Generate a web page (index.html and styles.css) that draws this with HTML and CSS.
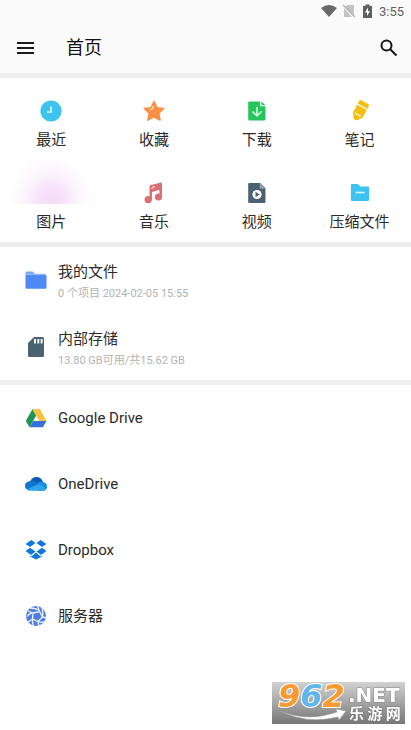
FILE: index.html
```html
<!DOCTYPE html>
<html lang="zh-CN">
<head>
<meta charset="utf-8">
<meta name="viewport" content="width=device-width, initial-scale=1">
<title>首页</title>
<link rel="stylesheet" href="styles.css">
</head>
<body>
<div class="status">
  <svg width="16" height="14" viewBox="0 0 16 14"><path d="M0 4Q8-2 16 4L8 13z" fill="#686868"/></svg>
  <svg class="sim" width="12" height="14" viewBox="0 0 12 14"><path d="M4 1h7v10L2 3zM1 4l8 9H1z" fill="#c4c4c4"/><path d="M0 1l12 12" stroke="#a8a8a8" stroke-width="1.2"/></svg>
  <svg class="battery" width="9" height="14" viewBox="0 0 9 14"><path d="M0 2h2.500V.5h4V2H9v12H0z" fill="#5f5f5f"/><path d="M5 3.500L2 8.500h2V12l3-5H5z" fill="#fff"/></svg>
  <span>3:55</span>
</div>
<header class="bar">
  <button class="icon-button" aria-label="菜单"><svg width="18" height="12" viewBox="0 0 18 12"><path d="M0 1h17M0 6h17M0 11h17" stroke="#1c1c1c" stroke-width="2"/></svg></button>
  <h1>首页</h1>
  <button class="icon-button" aria-label="搜索"><svg width="18" height="18" viewBox="0 0 18 18" fill="none" stroke="#161616" stroke-width="2"><circle cx="6.500" cy="6.500" r="5"/><path d="M10.200 10.200L16.500 16.500"/></svg></button>
</header>
<main>
  <nav class="grid">
    <a href="#recent"><svg width="24" height="24" viewBox="0 0 24 24"><circle cx="12" cy="12" r="10.600" fill="#3cc3ef"/><path d="M12 7.500V13H8" fill="none" stroke="#e4f8ff" stroke-width="1.600"/></svg><span>最近</span></a>
    <a href="#favorites"><svg width="24" height="24" viewBox="0 0 24 24"><path d="M12 2.500l3 6.200 6.800.8-5 4.700 1.300 6.900L12 17.900l-6.100 3.200 1.300-6.900-5-4.700 6.800-.8z" fill="#fa8f45" stroke="#fa8f45" stroke-width="1.500" stroke-linejoin="round"/><path d="M7.500 10.700q3.500 0 4-3.700" fill="none" stroke="#ffe2cc" stroke-width="1.300"/></svg><span>收藏</span></a>
    <a href="#downloads"><svg width="24" height="24" viewBox="0 0 24 24"><path d="M4.500 2.500h10.600v4.700H20.500v13q0 1.300-1.300 1.300H4.500q-1.300 0-1.300-1.300V3.800q0-1.300 1.300-1.300z" fill="#27c55d"/><path d="M16.300 2.500l4.200 3.700h-2.700q-1.500 0-1.500-1.500z" fill="#27c55d"/><path d="M12 8v9M7.500 12.500L12 17l4.500-4.500" fill="none" stroke="#e2ffeb" stroke-width="1.500"/></svg><span>下载</span></a>
    <a href="#notes"><svg width="24" height="24" viewBox="0 0 24 24"><g transform="rotate(28 12 12)"><path d="M6.500 3.500Q6.500 2 8 2h8q1.500 0 1.500 1.500v3h-11zM6.500 7.800h11v8.700l-3.500 5q-2 1.400-4 0l-3.500-5z" fill="#f6be10"/><path d="M8.500 15.500l1.800 1.300 1.700-1 1.700 1 1.800-1.300" fill="none" stroke="#fff4c5" stroke-width="1.200"/></g></svg><span>笔记</span></a>
    <a class="photos" href="#pictures"><i class="glow"></i><span>图片</span></a>
    <a href="#music"><svg width="24" height="24" viewBox="0 0 24 24"><g fill="#dc6f73"><circle cx="6.200" cy="18.700" r="3.600"/><circle cx="16.500" cy="16" r="3.600"/><path d="M7.500 5.500q0-1.200 1.300-1.500l9.500-2.300q1.700-.4 1.700 1.200V16h-2.600V9L10 11v8H7.500z"/></g><path d="M9.800 7.800q0-1.700 3.200-2.300" fill="none" stroke="#ffdcdc" stroke-width="1.200"/></svg><span>音乐</span></a>
    <a href="#videos"><svg width="24" height="24" viewBox="0 0 24 24"><path d="M4.500 2h10.700l5.300 5.300v13.400q0 1.300-1.300 1.300H4.500q-1.300 0-1.300-1.300V3.300Q3.200 2 4.500 2z" fill="#4b6270"/><path d="M14.700 2l5.800 5.800h-5.800z" fill="#92a0a8"/><circle cx="12" cy="13.500" r="4.600" fill="#fff"/><path d="M10.500 10.800l4.200 2.700-4.200 2.700z" fill="#4b6270"/></svg><span>视频</span></a>
    <a href="#archives"><svg width="24" height="24" viewBox="0 0 24 24"><path d="M4.200 3h5.600l2.500 2.500h7.500q1.300 0 1.300 1.300v12q0 1.300-1.300 1.300H4.200q-1.300 0-1.300-1.300V4.300Q2.900 3 4.200 3z" fill="#3cc3ef"/><path d="M7.500 11.500h9" stroke="#d8f6ff" stroke-width="1.600"/></svg><span>压缩文件</span></a>
  </nav>
  <section class="list local">
    <a href="#files"><svg width="24" height="24" viewBox="0 0 24 24"><path d="M1.500 4.500q0-1 1-1h6.200l2 2.200h9.800q1 0 1 1H1.500z" fill="#78a7fb"/><path d="M1.500 7h20q1 0 1 1v11.500q0 1.200-1.200 1.200H2.700q-1.200 0-1.200-1.200z" fill="#4e89f5"/></svg><span class="text"><b>我的文件</b><small>0 个项目 2024-02-05 15:55</small></span></a>
    <a href="#storage"><svg width="24" height="24" viewBox="0 0 24 24"><path d="M10 2h8.500Q20 2 20 3.500v17q0 1.500-1.500 1.500h-13Q4 22 4 20.500V8z" fill="#4b6270"/><path d="M11 4v4.500M14.300 4v4.500M17.600 4v4.500" stroke="#f0f4f5" stroke-width="2"/></svg><span class="text"><b>内部存储</b><small>13.80 GB可用/共15.62 GB</small></span></a>
  </section>
  <section class="list">
    <a href="#google"><svg width="24" height="24" viewBox="0 0 24 24"><path d="M8.500 3l3.700 6.500-6.700 11.700L1.800 15z" fill="#219653"/><path d="M8.500 3h7.300l6.700 11.900h-7.200z" fill="#fac13c"/><path d="M9.200 14.900h13.300l-3.700 6.300H5.500z" fill="#376fe1"/></svg><span class="text"><b>Google Drive</b></span></a>
    <a href="#onedrive"><svg width="24" height="24" viewBox="0 0 24 24"><path d="M6 10Q7.800 5 12.500 5q4.700 0 6.500 5l-4 5z" fill="#0a5bb1"/><path d="M4.800 9.500Q8 7.700 11 9.800l5 3-10.500 5.500Q1 17.500 1 14q0-3.600 3.800-4.500z" fill="#1075cf"/><path d="M13 11.500q2.500-3 6-1.500 4 .5 4 4.500 0 4.300-4 4.300h-6z" fill="#1a8be0"/><path d="M3 17.300l11-5q3.500.4 8 4.500-1.200 2-3.500 2H6q-2 0-3-1.500z" fill="#2ea6ed"/></svg><span class="text"><b>OneDrive</b></span></a>
    <a href="#dropbox"><svg width="24" height="24" viewBox="0 0 24 24" fill="#1078dc"><path d="M7.500 2L11.500 5 6 9 1.500 6zM16.500 2l6 4L18 9l-5.500-4zM6 9.800l5.500 3.700-4.500 3.500-5.500-4zM18 9.800l4.500 3.200-5.500 4-4.500-3.500zM5.500 17.500l1.800 1 4.700-4 4.700 4 1.800-1v.8L12 21.500l-6.500-3.200z"/></svg><span class="text"><b>Dropbox</b></span></a>
    <a href="#servers"><svg width="24" height="24" viewBox="0 0 24 24"><circle cx="12" cy="12" r="10" fill="#4d7de3"/><g fill="none" stroke="#eef5ff" stroke-width="1.300"><path d="M9 9l6.500-1.500 3 5.500-4.500 4.500L8.500 15zM9 9L4 7M15.500 7.500L13.500 2M18.500 13l4 1M14 17.500l1 5M8.500 15L3.500 18.500"/><path d="M6 4q5 0 8.500 2M3 12.500q2-3 5-3.500M18 4q1.500 5 .5 9M20.500 17.500q-3 1.500-6.500 0M8.500 15q-.5 3.500 1 6.500"/></g></svg><span class="text"><b>服务器</b></span></a>
  </section>
</main>
<svg class="watermark" width="133" height="50" viewBox="0 -8 133 50" aria-label="962.NET 乐游网">
  <defs><linearGradient id="shade" x2="0" y2="1"><stop stop-color="#d2d2d2"/><stop offset="1" stop-color="#777"/></linearGradient></defs>
  <path d="M0 0h133v42H0z" fill="url(#shade)"/>
  <text class="digits" x="6" y="25"><tspan fill="#f79a32">9</tspan><tspan fill="#62b6e9">6</tspan><tspan fill="#f79a32">2</tspan></text>
  <path d="M6 28q28 13 59 2l-1-3 10 2-7 9-1-3Q34 43 6 28z" fill="#fff" stroke="#999" stroke-width=".5"/>
  <text class="net" x="76" y="20">.NET</text>
  <text class="site" x="77" y="37">乐 游 网</text>
</svg>
</body>
</html>
```
FILE: styles.css
```css
* { box-sizing: border-box; }
body {
  margin: 0;
  min-height: 100vh;
  background: #fff;
  color: #2b2b2b;
  font-family: Roboto, "Noto Sans CJK SC", sans-serif;
}
svg { display: block; flex: none; }
a { color: inherit; text-decoration: none; }
.status {
  display: flex;
  align-items: center;
  justify-content: flex-end;
  height: 22px;
  padding-right: 7px;
  background: #fafafa;
  color: #616161;
  font-size: 13px;
}
.sim { margin-left: 6px; }
.battery { margin: 0 7px 0 8px; }
.bar {
  display: flex;
  align-items: center;
  height: 56px;
  padding: 0 6px 0 10px;
  background: #fafafa;
  border-bottom: 5px solid #eee;
}
.icon-button {
  display: grid;
  place-items: center;
  width: 32px;
  height: 32px;
  padding: 0;
  border: 0;
  background: none;
}
h1 {
  flex: 1;
  margin: 0 0 0 24px;
  color: #111;
  font-size: 18px;
  line-height: 24px;
  font-weight: 400;
}
.grid {
  display: grid;
  grid-template-columns: repeat(4, 1fr);
  border-bottom: 5px solid #eee;
}
.grid a {
  display: flex;
  flex-direction: column;
  align-items: center;
  gap: 7px;
  padding: 21px 0 10px;
  font-size: 15px;
  line-height: 20px;
}
.grid .photos { padding-top: 0; gap: 8px; }
.glow {
  width: 84px;
  height: 44px;
  background: radial-gradient(ellipse 42px 44px at 50% 92%, #f4dcf7 0%, #f6e2f9 30%, #fbf3fc 60%, #fff 100%);
}
.list a {
  display: flex;
  align-items: center;
  gap: 10px;
  height: 66px;
  padding: 0 24px;
}
.local { border-bottom: 5px solid #eee; }
.local a + a { margin-top: 1px; }
.text { display: flex; flex-direction: column; }
.local .text { padding-top: 4px; }
b { font-size: 15px; line-height: 24px; font-weight: 400; }
small { color: #b3b3b3; font-size: 11px; line-height: 20px; }
.watermark { position: fixed; right: 6px; bottom: 6px; }
.digits {
  font: italic bold 32px "DejaVu Sans", sans-serif;
  stroke: #fff;
  stroke-width: 2px;
  paint-order: stroke;
}
.net { font: bold 20px "DejaVu Sans", sans-serif; fill: #fff; stroke: #888; stroke-width: 1px; paint-order: stroke; }
.site { font: bold 15px "Noto Sans CJK SC", sans-serif; fill: #fff; stroke: #777; stroke-width: 1px; paint-order: stroke; }
```
